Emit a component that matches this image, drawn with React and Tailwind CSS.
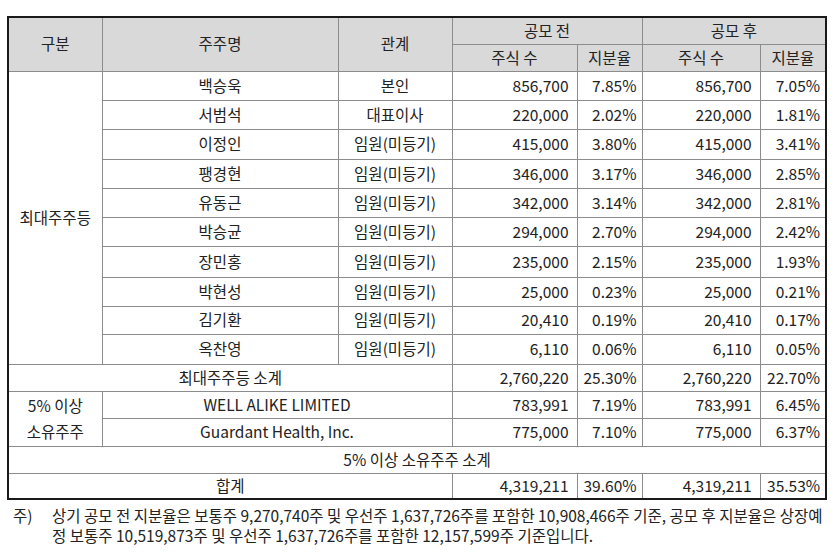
import React from 'react'

const rows = [
  { name: '백승욱', rel: '본인', pre: '856,700', preP: '7.85%', post: '856,700', postP: '7.05%', h: 'h-[29px]' },
  { name: '서범석', rel: '대표이사', pre: '220,000', preP: '2.02%', post: '220,000', postP: '1.81%', h: 'h-[29px]' },
  { name: '이정인', rel: '임원(미등기)', pre: '415,000', preP: '3.80%', post: '415,000', postP: '3.41%', h: 'h-[30px]' },
  { name: '팽경현', rel: '임원(미등기)', pre: '346,000', preP: '3.17%', post: '346,000', postP: '2.85%', h: 'h-[29px]' },
  { name: '유동근', rel: '임원(미등기)', pre: '342,000', preP: '3.14%', post: '342,000', postP: '2.81%', h: 'h-[29px]' },
  { name: '박승균', rel: '임원(미등기)', pre: '294,000', preP: '2.70%', post: '294,000', postP: '2.42%', h: 'h-[29px]' },
  { name: '장민홍', rel: '임원(미등기)', pre: '235,000', preP: '2.15%', post: '235,000', postP: '1.93%', h: 'h-[31px]' },
  { name: '박현성', rel: '임원(미등기)', pre: '25,000', preP: '0.23%', post: '25,000', postP: '0.21%', h: 'h-[29px]' },
  { name: '김기환', rel: '임원(미등기)', pre: '20,410', preP: '0.19%', post: '20,410', postP: '0.17%', h: 'h-[28px]' },
  { name: '옥찬영', rel: '임원(미등기)', pre: '6,110', preP: '0.06%', post: '6,110', postP: '0.05%', h: 'h-[30px]' },
]

// table cells: thin grey grid, table itself carries the dark 2px frame
const cell = 'border border-[#8c8c8c] p-0 pb-[2px] align-middle'
const num = cell + ' text-right pr-[8px]'
const pct = cell + ' text-right pr-[5px]'
const ctr = cell + ' text-center'
const head = 'border border-[#8c8c8c] p-0 pb-[2px] text-center font-normal bg-[#d9d9d9]'

export default function App() {
  return (
    <div className="min-h-screen bg-white pt-[16px] pl-[7px] text-[15.5px] leading-[20px] text-[#222] font-['Noto_Sans_CJK_KR','Liberation_Sans',sans-serif]">
      <table className="table-fixed border-collapse border-2 border-[#1a1a1a] w-[818px]">
        <colgroup>
          <col className="w-[94px]" />
          <col className="w-[236px]" />
          <col className="w-[114px]" />
          <col className="w-[125px]" />
          <col className="w-[65px]" />
          <col className="w-[118px]" />
          <col className="w-[66px]" />
        </colgroup>
        <thead>
          <tr className="h-[27px]">
            <th rowSpan={2} className={head}>구분</th>
            <th rowSpan={2} className={head}>주주명</th>
            <th rowSpan={2} className={head}>관계</th>
            <th colSpan={2} className={head}>공모 전</th>
            <th colSpan={2} className={head}>공모 후</th>
          </tr>
          <tr className="h-[27px]">
            <th className={head}>주식 수</th>
            <th className={head}>지분율</th>
            <th className={head}>주식 수</th>
            <th className={head}>지분율</th>
          </tr>
        </thead>
        <tbody>
          {rows.map((r, i) => (
            <tr key={r.name} className={r.h}>
              {i === 0 && (
                <td rowSpan={10} className={ctr}>최대주주등</td>
              )}
              <td className={ctr}>{r.name}</td>
              <td className={ctr}>{r.rel}</td>
              <td className={num}>{r.pre}</td>
              <td className={pct}>{r.preP}</td>
              <td className={num}>{r.post}</td>
              <td className={pct}>{r.postP}</td>
            </tr>
          ))}
          <tr className="h-[27px]">
            <td colSpan={3} className={ctr}>최대주주등 소계</td>
            <td className={num}>2,760,220</td>
            <td className={pct}>25.30%</td>
            <td className={num}>2,760,220</td>
            <td className={pct}>22.70%</td>
          </tr>
          <tr className="h-[26px]">
            <td rowSpan={2} className={ctr + ' leading-[26px]'}>
              5% 이상<br />소유주주
            </td>
            <td colSpan={2} className={ctr}>WELL ALIKE LIMITED</td>
            <td className={num}>783,991</td>
            <td className={pct}>7.19%</td>
            <td className={num}>783,991</td>
            <td className={pct}>6.45%</td>
          </tr>
          <tr className="h-[26px]">
            <td colSpan={2} className={ctr}>Guardant Health, Inc.</td>
            <td className={num}>775,000</td>
            <td className={pct}>7.10%</td>
            <td className={num}>775,000</td>
            <td className={pct}>6.37%</td>
          </tr>
          <tr className="h-[27px]">
            <td colSpan={7} className={ctr}>5% 이상 소유주주 소계</td>
          </tr>
          <tr className="h-[26px]">
            <td colSpan={3} className={ctr}>합계</td>
            <td className={num}>4,319,211</td>
            <td className={pct}>39.60%</td>
            <td className={num}>4,319,211</td>
            <td className={pct}>35.53%</td>
          </tr>
        </tbody>
      </table>

      <div className="mt-[5px] flex leading-[20px]">
        <div className="w-[45px] shrink-0 pl-[6px]">주)</div>
        <div>
          <div className="whitespace-nowrap">상기 공모 전 지분율은 보통주 9,270,740주 및 우선주 1,637,726주를 포함한 10,908,466주 기준, 공모 후 지분율은 상장예</div>
          <div className="whitespace-nowrap">정 보통주 10,519,873주 및 우선주 1,637,726주를 포함한 12,157,599주 기준입니다.</div>
        </div>
      </div>
    </div>
  )
}
